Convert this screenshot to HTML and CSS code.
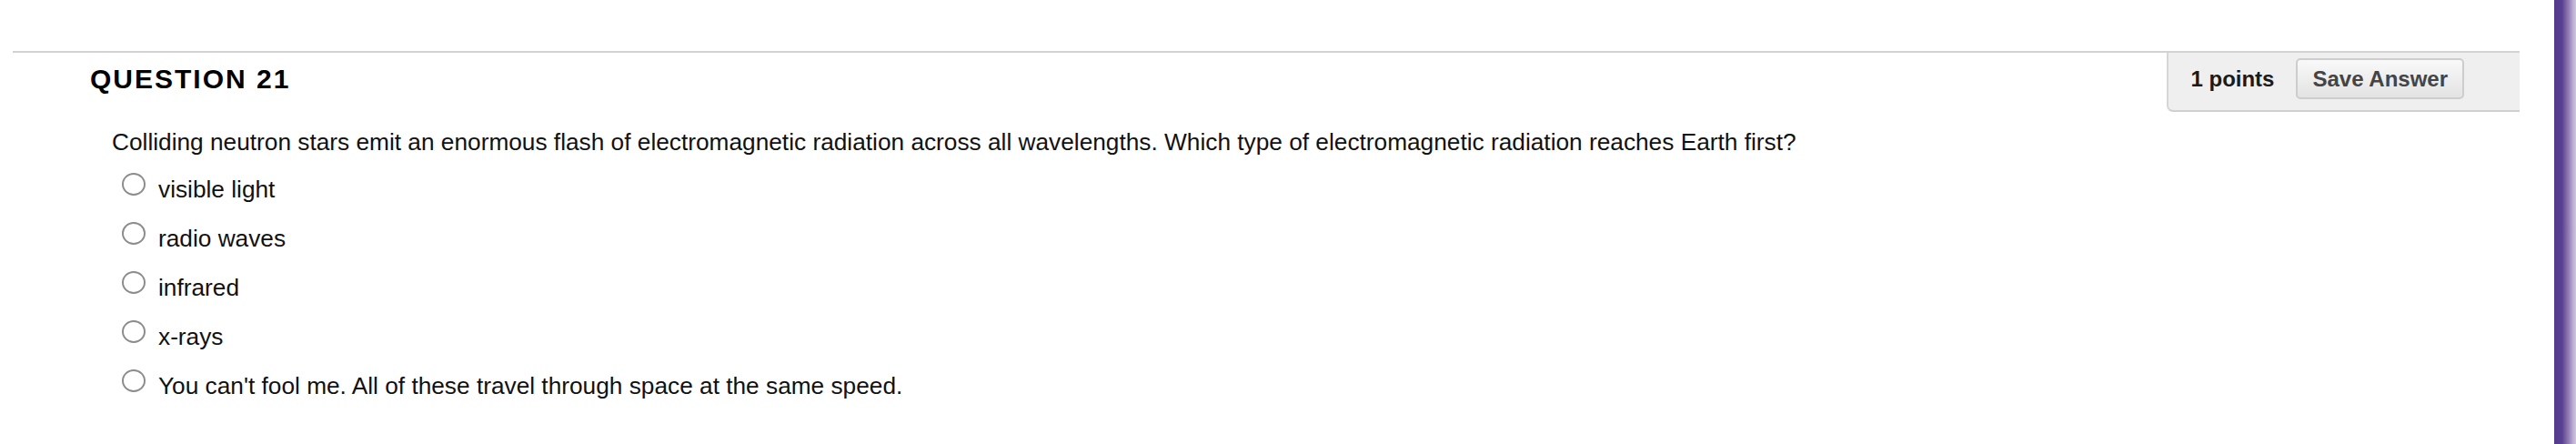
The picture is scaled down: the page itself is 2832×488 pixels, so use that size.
FILE: index.html
```html
<!DOCTYPE html>
<html lang="en">
<head>
<meta charset="utf-8">
<title>Question 21</title>
<link rel="stylesheet" href="styles.css">
</head>
<body>
<div class="page">
  <main class="main">
    <section class="question">
      <div class="q-header">
        <h3 class="q-title">QUESTION 21</h3>
        <div class="q-points">
          <span class="points">1 points</span>
          <button class="save-btn" type="button">Save Answer</button>
        </div>
      </div>
      <p class="q-text">Colliding neutron stars emit an enormous flash of electromagnetic radiation across all wavelengths. Which type of electromagnetic radiation reaches Earth first?</p>
      <ul class="options">
        <li class="option"><span class="radio"></span><span class="label">visible light</span></li>
        <li class="option"><span class="radio"></span><span class="label">radio waves</span></li>
        <li class="option"><span class="radio"></span><span class="label">infrared</span></li>
        <li class="option"><span class="radio"></span><span class="label">x-rays</span></li>
        <li class="option"><span class="radio"></span><span class="label">You can't fool me. All of these travel through space at the same speed.</span></li>
      </ul>
    </section>
  </main>
  <div class="sidebar"></div>
</div>
</body>
</html>
```
FILE: styles.css
```css
* { box-sizing: border-box; }
html, body { margin: 0; padding: 0; background: #fff; }
body { font-family: "Liberation Sans", Arial, Helvetica, sans-serif; color: #111; }

.page { display: flex; min-height: 488px; }
.main { flex: 1; padding: 56px 38px 0 14px; }
.sidebar {
  width: 24px;
  background: linear-gradient(to right, #533a8e 0%, #583f91 35%, #8f7ab3 65%, #c0b1d4 88%, #cfc3de 100%);
}

.question { border-top: 2px solid #d2d2d2; }

.q-header { display: flex; justify-content: space-between; align-items: flex-start; }
.q-title {
  margin: 0;
  padding: 12px 0 0 85px;
  font-size: 30px;
  line-height: 34px;
  font-weight: bold;
  letter-spacing: 2px;
  color: #000;
}

.q-points {
  display: flex;
  align-items: center;
  gap: 24px;
  padding: 6px 61px 12px 24px;
  background: #efefef;
  border-left: 2px solid #d6d6d6;
  border-bottom: 2px solid #d0d0d0;
  border-bottom-left-radius: 7px;
}
.points { font-size: 24px; font-weight: bold; color: #1a1a1a; }
.save-btn {
  height: 45px;
  padding: 0 16px;
  font-family: inherit;
  font-size: 24px;
  font-weight: bold;
  color: #444;
  background: linear-gradient(to bottom, #f9f9f9, #e3e3e3);
  border: 2px solid #cdcdcd;
  border-radius: 5px;
}

.q-text {
  margin: 18px 0 0 109px;
  font-size: 26.25px;
  line-height: 30px;
  color: #111;
}

.options { list-style: none; margin: 19px 0 0 120px; padding: 0; }
.option { display: flex; align-items: flex-start; gap: 14px; height: 36px; margin-bottom: 18px; }
.radio {
  width: 26px;
  height: 25px;
  border: 2px solid #8c8c8c;
  border-radius: 50%;
  background: #fff;
  flex: none;
}
.label { font-size: 26.25px; line-height: 36px; color: #111; }
```
